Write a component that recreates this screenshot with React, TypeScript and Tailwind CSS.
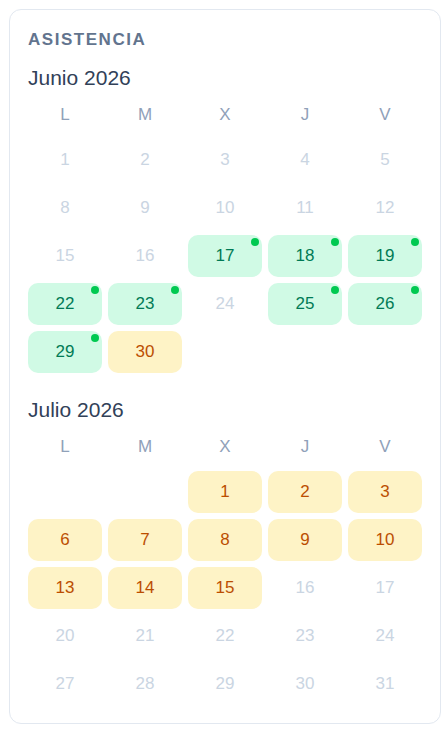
import React from "react";

type Status = "none" | "present" | "pending";

type Month = {
  title: string;
  offset: number;
  days: number;
  status: Record<number, Status>;
  dot: number[];
};

const weekdays = ["L", "M", "X", "J", "V"];

const months: Month[] = [
  {
    title: "Junio 2026",
    offset: 0,
    days: 30,
    status: {
      17: "present",
      18: "present",
      19: "present",
      22: "present",
      23: "present",
      25: "present",
      26: "present",
      29: "present",
      30: "pending",
    },
    dot: [17, 18, 19, 22, 23, 25, 26, 29],
  },
  {
    title: "Julio 2026",
    offset: 2,
    days: 31,
    status: {
      1: "pending",
      2: "pending",
      3: "pending",
      6: "pending",
      7: "pending",
      8: "pending",
      9: "pending",
      10: "pending",
      13: "pending",
      14: "pending",
      15: "pending",
    },
    dot: [],
  },
];

// weekdays only: skip sat/sun
const buildDays = (m: Month) => {
  const cells: (number | null)[] = [];
  for (let i = 0; i < m.offset; i++) cells.push(null);
  const startDow = m.offset; // 0 = monday
  for (let d = 1; d <= m.days; d++) {
    const dow = (startDow + d - 1) % 7;
    if (dow < 5) cells.push(d);
  }
  return cells;
};

const DayCell = ({ day, status, dot }: { day: number; status: Status; dot: boolean }) => {
  if (status === "present") {
    return (
      <div className="relative h-[42px] rounded-[10px] bg-emerald-100 flex items-center justify-center text-[17px] text-emerald-700">
        {day}
        {dot && <span className="absolute top-[3px] right-[3px] size-2 rounded-full bg-green-500" />}
      </div>
    );
  }
  if (status === "pending") {
    return (
      <div className="h-[42px] rounded-[10px] bg-amber-100 flex items-center justify-center text-[17px] text-amber-700">
        {day}
      </div>
    );
  }
  return (
    <div className="h-[42px] flex items-center justify-center text-[17px] text-slate-300">{day}</div>
  );
};

const MonthGrid = ({ month }: { month: Month }) => {
  const cells = buildDays(month);
  return (
    <div>
      <h3 className="text-[21px] leading-7 text-slate-700">{month.title}</h3>
      <div className="mt-[5px] grid grid-cols-5 gap-[6px]">
        {weekdays.map((w) => (
          <div key={w} className="h-9 flex items-center justify-center text-[17px] text-slate-400">
            {w}
          </div>
        ))}
        {cells.map((d, i) =>
          d === null ? (
            <div key={`e${i}`} className="h-[42px]" />
          ) : (
            <DayCell
              key={d}
              day={d}
              status={month.status[d] ?? "none"}
              dot={month.dot.includes(d)}
            />
          )
        )}
      </div>
    </div>
  );
};

export default function App() {
  return (
    <div className="min-h-[730px] bg-white pl-[9px] pt-[9px] font-['Liberation_Sans',Arial,sans-serif]">
      <div className="w-[432px] rounded-xl border border-slate-200 bg-white p-[18px]">
        <h2 className="text-[17px] leading-6 font-bold uppercase tracking-[0.09em] text-slate-500">
          Asistencia
        </h2>
        <div className="mt-3 flex flex-col gap-[23px]">
          {months.map((m) => (
            <MonthGrid key={m.title} month={m} />
          ))}
        </div>
      </div>
    </div>
  );
}
